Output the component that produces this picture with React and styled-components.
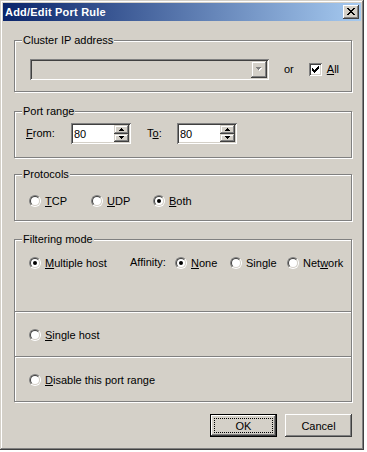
import React from 'react';
import styled, { createGlobalStyle } from 'styled-components';

const GlobalStyle = createGlobalStyle`
  html, body { margin: 0; padding: 0; background: #fff; }
  body {
    font-family: "Liberation Sans", Arial, sans-serif;
    font-size: 11px;
    color: #000;
  }
`;

const Window = styled.div`
  width: 364px;
  height: 450px;
  box-sizing: border-box;
  padding: 3px;
  background: #d4d0c8;
  box-shadow: inset -1px -1px #404040, inset 1px 1px #d4d0c8,
    inset -2px -2px #808080, inset 2px 2px #fff;
  display: flex;
  flex-direction: column;
`;

const TitleBar = styled.div`
  height: 18px;
  flex: none;
  display: flex;
  align-items: center;
  justify-content: space-between;
  padding: 0 2px 0 2px;
  background: linear-gradient(to right, #0a246a, #a6caf0);
`;

const TitleText = styled.span`
  color: #fff;
  font-weight: bold;
  font-size: 11px;
  letter-spacing: 0.2px;
`;

const CloseBtn = styled.div`
  width: 16px;
  height: 14px;
  box-sizing: border-box;
  background: #d4d0c8;
  box-shadow: inset -1px -1px #404040, inset 1px 1px #fff,
    inset -2px -2px #808080, inset 2px 2px #d4d0c8;
  display: flex;
  align-items: center;
  justify-content: center;
  padding: 0 0 1px 0;
`;

const Body = styled.div`
  padding: 19px 9px 0 11px;
  display: flex;
  flex-direction: column;
`;

const Group = styled.div`
  position: relative;
  box-sizing: border-box;
  height: ${p => p.h}px;
  margin-top: ${p => p.mt || 0}px;
  border: 1px solid #808080;
  box-shadow: inset 1px 1px #fff, 1px 1px #fff;
  padding: ${p => p.pad || '0'};
  display: flex;
  flex-direction: column;
`;

const Legend = styled.span`
  position: absolute;
  top: -7px;
  left: 7px;
  line-height: 13px;
  padding: 0 1px;
  background: #d4d0c8;
`;

const Row = styled.div`
  display: flex;
  align-items: center;
`;

const Combo = styled.div`
  width: 239px;
  height: 21px;
  box-sizing: border-box;
  padding: 2px;
  background: #d4d0c8;
  box-shadow: inset 1px 1px #808080, inset -1px -1px #fff,
    inset 2px 2px #404040, inset -2px -2px #d4d0c8;
  display: flex;
  justify-content: flex-end;
`;

const DropBtn = styled.div`
  width: 16px;
  box-sizing: border-box;
  background: #d4d0c8;
  box-shadow: inset -1px -1px #404040, inset 1px 1px #d4d0c8,
    inset -2px -2px #808080, inset 2px 2px #fff;
  display: flex;
  align-items: center;
  justify-content: center;
`;

const Text = styled.span`
  margin-left: ${p => p.ml || 0}px;
  width: ${p => (p.w ? `${p.w}px` : 'auto')};
  flex: none;
  white-space: nowrap;
  line-height: 13px;
`;

const Check = styled.span`
  width: 13px;
  height: 13px;
  box-sizing: border-box;
  margin-left: ${p => p.ml || 0}px;
  padding: 3px;
  background: #fff;
  box-shadow: inset 1px 1px #808080, inset -1px -1px #fff,
    inset 2px 2px #404040, inset -2px -2px #d4d0c8;
  display: flex;
  flex: none;
`;

const Spin = styled.div`
  width: 60px;
  height: 21px;
  box-sizing: border-box;
  padding: 2px;
  background: #fff;
  box-shadow: inset 1px 1px #808080, inset -1px -1px #fff,
    inset 2px 2px #404040, inset -2px -2px #d4d0c8;
  display: flex;
`;

const SpinValue = styled.span`
  flex: 1;
  padding-left: 1px;
  display: flex;
  align-items: center;
`;

const SpinButtons = styled.div`
  width: 15px;
  display: flex;
  flex-direction: column;
`;

const SpinBtn = styled.div`
  flex: 1;
  background: #d4d0c8;
  box-shadow: inset -1px -1px #404040, inset 1px 1px #d4d0c8,
    inset -2px -2px #808080, inset 2px 2px #fff;
  display: flex;
  align-items: center;
  justify-content: center;
`;

const Option = styled.label`
  display: flex;
  align-items: center;
  flex: none;
  width: ${p => (p.w ? `${p.w}px` : 'auto')};
  gap: 4px;
`;

const RadioOuter = styled.span`
  box-sizing: border-box;
  width: 12px;
  height: 12px;
  border-radius: 50%;
  border: 1px solid;
  border-color: #808080 #fff #fff #808080;
  display: flex;
  flex: none;
`;

const RadioInner = styled.span`
  flex: 1;
  border-radius: 50%;
  border: 1px solid;
  border-color: #404040 #d4d0c8 #d4d0c8 #404040;
  background: #fff;
  display: flex;
  align-items: center;
  justify-content: center;
`;

const Dot = styled.span`
  width: 4px;
  height: 4px;
  border-radius: 50%;
  background: #000;
`;

const Section = styled.div`
  height: ${p => p.h}px;
  box-sizing: border-box;
  padding: ${p => p.pad || '0 0 0 14px'};
  display: flex;
  align-items: ${p => (p.top ? 'flex-start' : 'center')};
`;

const Divider = styled.div`
  height: 2px;
  box-sizing: border-box;
  border-top: 1px solid #808080;
  border-bottom: 1px solid #fff;
`;

const Buttons = styled.div`
  margin-top: 12px;
  display: flex;
  justify-content: flex-end;
  gap: 8px;
`;

const Button = styled.div`
  position: relative;
  width: 67px;
  height: 23px;
  box-sizing: border-box;
  display: flex;
  align-items: center;
  justify-content: center;
  background: #d4d0c8;
  border: ${p => (p.primary ? '1px solid #000' : 'none')};
  box-shadow: inset -1px -1px #404040, inset 1px 1px #fff,
    inset -2px -2px #808080, inset 2px 2px #d4d0c8;

  &::after {
    content: '';
    display: ${p => (p.primary ? 'block' : 'none')};
    position: absolute;
    inset: 3px;
    border: 1px dotted #000;
  }
`;

const CloseGlyph = () => (
  <svg width="8" height="7" viewBox="0 0 8 7" shapeRendering="crispEdges">
    <path
      fill="#000"
      d="M0 0h2v1H0z M6 0h2v1H6z M1 1h2v1H1z M5 1h2v1H5z M2 2h4v1H2z M3 3h2v1H3z M2 4h4v1H2z M1 5h2v1H1z M5 5h2v1H5z M0 6h2v1H0z M6 6h2v1H6z"
    />
  </svg>
);

const CheckGlyph = () => (
  <svg width="7" height="7" viewBox="0 0 7 7" shapeRendering="crispEdges">
    <path
      fill="#000"
      d="M6 0h1v1H6z M5 1h2v1H5z M0 2h1v1H0z M4 2h3v1H4z M0 3h2v1H0z M3 3h3v1H3z M0 4h5v1H0z M1 5h3v1H1z M2 6h1v1H2z"
    />
  </svg>
);

const DownArrowDisabled = () => (
  <svg width="8" height="5" viewBox="0 0 8 5" shapeRendering="crispEdges">
    <path fill="#fff" d="M2 1h5v1H2z M3 2h3v1H3z M4 3h1v1H4z" />
    <path fill="#808080" d="M1 0h5v1H1z M2 1h3v1H2z M3 2h1v1H3z" />
  </svg>
);

const SpinArrow = ({ up }) => (
  <svg width="5" height="3" viewBox="0 0 5 3" shapeRendering="crispEdges">
    <path
      fill="#000"
      d={up ? 'M2 0h1v1H2z M1 1h3v1H1z M0 2h5v1H0z' : 'M0 0h5v1H0z M1 1h3v1H1z M2 2h1v1H2z'}
    />
  </svg>
);

const Radio = ({ checked }) => (
  <RadioOuter>
    <RadioInner>{checked && <Dot />}</RadioInner>
  </RadioOuter>
);

const RadioOption = ({ w, checked, children }) => (
  <Option w={w}>
    <Radio checked={checked} />
    <span>{children}</span>
  </Option>
);

const SpinEdit = ({ value }) => (
  <Spin>
    <SpinValue>{value}</SpinValue>
    <SpinButtons>
      <SpinBtn><SpinArrow up /></SpinBtn>
      <SpinBtn><SpinArrow /></SpinBtn>
    </SpinButtons>
  </Spin>
);

export default function App() {
  return (
    <>
      <GlobalStyle />
      <Window>
        <TitleBar>
          <TitleText>Add/Edit Port Rule</TitleText>
          <CloseBtn><CloseGlyph /></CloseBtn>
        </TitleBar>
        <Body>
          <Group h={52} pad="18px 0 0 15px">
            <Legend>Cluster IP address</Legend>
            <Row>
              <Combo>
                <DropBtn><DownArrowDisabled /></DropBtn>
              </Combo>
              <Text ml={15}>or</Text>
              <Check ml={15}><CheckGlyph /></Check>
              <Text ml={5}><u>A</u>ll</Text>
            </Row>
          </Group>

          <Group h={47} mt={19} pad="11px 0 0 11px">
            <Legend>Port range</Legend>
            <Row>
              <Text w={45}><u>F</u>rom:</Text>
              <SpinEdit value="80" />
              <Text ml={16} w={30}>T<u>o</u>:</Text>
              <SpinEdit value="80" />
            </Row>
          </Group>

          <Group h={47} mt={16} pad="20px 0 0 14px">
            <Legend>Protocols</Legend>
            <Row>
              <RadioOption w={62}><u>T</u>CP</RadioOption>
              <RadioOption w={62}><u>U</u>DP</RadioOption>
              <RadioOption checked><u>B</u>oth</RadioOption>
            </Row>
          </Group>

          <Group h={163} mt={18}>
            <Legend>Filtering mode</Legend>
            <Section h={71} pad="16px 0 0 14px" top>
              <Row>
                <RadioOption w={101} checked><u>M</u>ultiple host</RadioOption>
                <Text w={45}>Affinity:</Text>
                <RadioOption w={55} checked><u>N</u>one</RadioOption>
                <RadioOption w={57}>Sin<u>g</u>le</RadioOption>
                <RadioOption>Net<u>w</u>ork</RadioOption>
              </Row>
            </Section>
            <Divider />
            <Section h={43}>
              <RadioOption><u>S</u>ingle host</RadioOption>
            </Section>
            <Divider />
            <Section h={43}>
              <RadioOption><u>D</u>isable this port range</RadioOption>
            </Section>
          </Group>

          <Buttons>
            <Button primary>OK</Button>
            <Button>Cancel</Button>
          </Buttons>
        </Body>
      </Window>
    </>
  );
}
